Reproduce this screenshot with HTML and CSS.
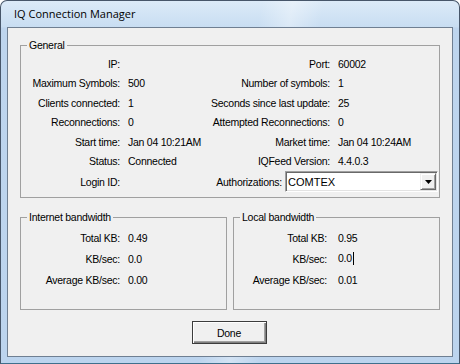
FILE: index.html
```html
<!DOCTYPE html>
<html lang="en">
<head>
  <meta charset="UTF-8" />
  <title>IQ Connection Manager</title>
  <link rel="stylesheet" href="styles.css">
</head>
<body>
  <div class="window">
    <div class="titlebar">IQ Connection Manager</div>

    <div class="client">
      <fieldset class="group general">
        <legend>General</legend>
        <div class="row">
          <span class="label">IP:</span><span class="value"></span>
          <span class="label">Port:</span><span class="value">60002</span>
        </div>
        <div class="row">
          <span class="label">Maximum Symbols:</span><span class="value">500</span>
          <span class="label">Number of symbols:</span><span class="value">1</span>
        </div>
        <div class="row">
          <span class="label">Clients connected:</span><span class="value">1</span>
          <span class="label">Seconds since last update:</span><span class="value">25</span>
        </div>
        <div class="row">
          <span class="label">Reconnections:</span><span class="value">0</span>
          <span class="label">Attempted Reconnections:</span><span class="value">0</span>
        </div>
        <div class="row">
          <span class="label">Start time:</span><span class="value">Jan 04 10:21AM</span>
          <span class="label">Market time:</span><span class="value">Jan 04 10:24AM</span>
        </div>
        <div class="row">
          <span class="label">Status:</span><span class="value">Connected</span>
          <span class="label">IQFeed Version:</span><span class="value">4.4.0.3</span>
        </div>
        <div class="row row-auth">
          <span class="label">Login ID:</span><span class="value"></span>
          <span class="label">Authorizations:</span>
          <div class="combo">
            <span class="combo-text">COMTEX</span>
            <span class="combo-btn">
              <svg width="7" height="4" viewBox="0 0 7 4"><path d="M0 0h7L3.5 4z" fill="#000"/></svg>
            </span>
          </div>
        </div>
      </fieldset>

      <div class="bandwidth">
        <fieldset class="group net">
          <legend>Internet bandwidth</legend>
          <div class="bw-row"><span class="label">Total KB:</span><span class="value">0.49</span></div>
          <div class="bw-row"><span class="label">KB/sec:</span><span class="value">0.0</span></div>
          <div class="bw-row"><span class="label">Average KB/sec:</span><span class="value">0.00</span></div>
        </fieldset>
        <fieldset class="group local">
          <legend>Local bandwidth</legend>
          <div class="bw-row"><span class="label">Total KB:</span><span class="value">0.95</span></div>
          <div class="bw-row"><span class="label">KB/sec:</span><span class="value">0.0<span class="caret"></span></span></div>
          <div class="bw-row"><span class="label">Average KB/sec:</span><span class="value">0.01</span></div>
        </fieldset>
      </div>

      <div class="actions">
        <button class="btn">Done</button>
      </div>
    </div>
  </div>
</body>
</html>
```

FILE: styles.css
```css
* {
  box-sizing: border-box;
}

body {
  margin: 0;
  background: #fff;
  font-family: 'Liberation Sans', Arial, sans-serif;
  font-size: 10.5px;
  letter-spacing: -0.25px;
  color: #000;
}

/* window frame */
.window {
  width: 460px;
  height: 364px;
  display: flex;
  flex-direction: column;
  padding: 0 6px 6px 6px;
  border: 1px solid #47566a;
  border-bottom-color: #3f6f8c;
  border-radius: 7px 7px 0 0;
  background:
    linear-gradient(100deg, rgba(255, 255, 255, 0) 50%, rgba(255, 255, 255, 0.35) 56%, rgba(255, 255, 255, 0) 62%),
    linear-gradient(180deg, #dceaf8 0, #c8ddf2 26px, #bed5ee 27px, #bcd4ee 100%);
}

.titlebar {
  height: 26px;
  line-height: 26px;
  padding-left: 7px;
  font-family: 'Open Sans', 'Liberation Sans', sans-serif;
  font-size: 11px;
  letter-spacing: 0;
  color: #000;
}

.client {
  flex: 1;
  display: flex;
  flex-direction: column;
  padding: 0 12px;
  border: 1px solid #6f7f92;
  background: #f0f0f0;
}

/* group boxes */
.group {
  margin: 0;
  min-width: 0;
  border: 1px solid #a0a0a0;
}

.group legend {
  margin-left: 6px;
  padding: 0 2px;
  line-height: 12px;
}

.general {
  margin-top: 11px;
  padding: 3px 0 5px 0;
}

.row {
  display: grid;
  grid-template-columns: 107px 80px 130px 1fr;
  align-items: center;
  height: 19.5px;
  white-space: nowrap;
}

.row-auth {
  grid-template-columns: 107px 80px 77px 1fr;
  height: 21px;
}

.label {
  text-align: right;
  padding-right: 8px;
}

.row-auth .label:nth-of-type(3) {
  padding-right: 3px;
}

/* combo box */
.combo {
  display: flex;
  align-items: center;
  height: 21px;
  margin-right: 1px;
  padding: 1px;
  background: #fff;
  border: 1px solid;
  border-color: #a0a0a0 #fff #fff #a0a0a0;
  box-shadow: inset 1px 1px 0 #696969, inset -1px -1px 0 #e3e3e3;
}

.combo-text {
  flex: 1;
  padding-left: 1px;
  font-size: 11px;
  letter-spacing: 0;
}

.combo-btn {
  display: flex;
  align-items: center;
  justify-content: center;
  width: 16px;
  height: 17px;
  background: #f0f0f0;
  border: 1px solid;
  border-color: #f0f0f0 #696969 #696969 #f0f0f0;
  box-shadow: inset 1px 1px 0 #fff, inset -1px -1px 0 #a0a0a0;
}

/* bandwidth */
.bandwidth {
  display: flex;
  gap: 6px;
  margin-top: 13px;
}

.bandwidth .group {
  flex: 1;
  padding: 4px 0 19px 0;
}

.bw-row {
  display: grid;
  grid-template-columns: 107px 1fr;
  align-items: center;
  height: 21px;
}

.local .bw-row {
  grid-template-columns: 104px 1fr;
}

.local .label {
  padding-right: 11px;
}

.caret {
  display: inline-block;
  width: 1px;
  height: 13px;
  margin-left: 1px;
  background: #000;
  vertical-align: middle;
}

/* button */
.actions {
  display: flex;
  justify-content: center;
  padding-right: 2px;
  margin-top: 11px;
}

.btn {
  width: 75px;
  height: 23px;
  padding: 0;
  font-family: inherit;
  font-size: 10.5px;
  letter-spacing: -0.25px;
  color: #000;
  background: #f0f0f0;
  border: 1px solid #3c3c3c;
  box-shadow: inset 1px 1px 0 #fff, inset -1px -1px 0 #808080, inset -2px -2px 0 #a0a0a0;
}
```
